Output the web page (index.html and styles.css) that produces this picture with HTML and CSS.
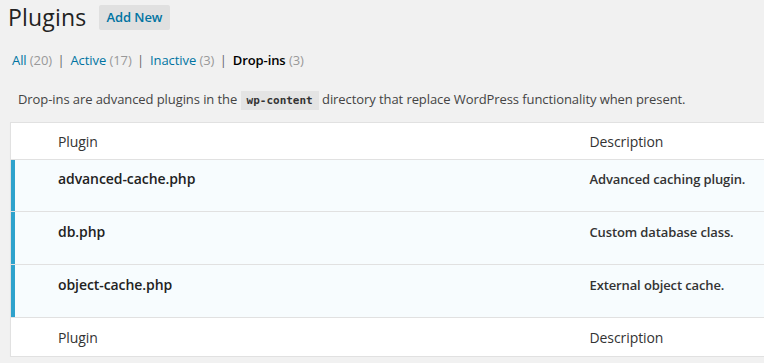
FILE: index.html
```html
<!DOCTYPE html>
<html lang="en">
<head>
  <meta charset="UTF-8" />
  <title>Plugins</title>
  <link rel="stylesheet" href="styles.css">
</head>
<body>
  <div class="wrap">
    <div class="title-row">
      <h1>Plugins</h1>
      <a class="add-new" href="#">Add New</a>
    </div>

    <ul class="subsubsub">
      <li><a href="#">All <span class="count">(20)</span></a> <span class="sep">|</span></li>
      <li><a href="#">Active <span class="count">(17)</span></a> <span class="sep">|</span></li>
      <li><a href="#">Inactive <span class="count">(3)</span></a> <span class="sep">|</span></li>
      <li><a class="current" href="#">Drop-ins <span class="count">(3)</span></a></li>
    </ul>

    <p class="intro">Drop-ins are advanced plugins in the <code>wp-content</code> directory that replace WordPress functionality when present.</p>

    <table class="plugins">
      <thead>
        <tr>
          <th class="col-name">Plugin</th>
          <th class="col-desc">Description</th>
        </tr>
      </thead>
      <tbody>
        <tr class="active">
          <td class="col-name"><strong>advanced-cache.php</strong></td>
          <td class="col-desc"><p>Advanced caching plugin.</p></td>
        </tr>
        <tr class="active">
          <td class="col-name"><strong>db.php</strong></td>
          <td class="col-desc"><p>Custom database class.</p></td>
        </tr>
        <tr class="active">
          <td class="col-name"><strong>object-cache.php</strong></td>
          <td class="col-desc"><p>External object cache.</p></td>
        </tr>
      </tbody>
      <tfoot>
        <tr>
          <th class="col-name">Plugin</th>
          <th class="col-desc">Description</th>
        </tr>
      </tfoot>
    </table>
  </div>
</body>
</html>
```

FILE: styles.css
```css
body {
  margin: 0;
  background: #f1f1f1;
  color: #444;
  font-family: 'Open Sans', sans-serif;
  font-size: 13px;
  letter-spacing: -0.08px;
  overflow: hidden;
}

.wrap {
  padding: 0 0 0 8px;
  width: 790px;
}

.title-row {
  display: flex;
  align-items: center;
  height: 36px;
}

h1 {
  margin: 0;
  font-size: 23px;
  font-weight: 400;
  letter-spacing: 0.2px;
  color: #222;
  line-height: 36px;
  position: relative;
  top: -1px;
}

.add-new {
  margin-left: 12px;
  padding: 0 8px;
  height: 25px;
  line-height: 25px;
  background: #e0e0e0;
  color: #0074a2;
  font-weight: 600;
  font-size: 13px;
  text-decoration: none;
  border-radius: 2px;
  position: relative;
  top: -1px;
}

.subsubsub {
  list-style: none;
  margin: 15px 0 0 4px;
  padding: 0;
  display: flex;
  gap: 4px;
  line-height: 18px;
  color: #666;
}

.subsubsub a {
  color: #0074a2;
  text-decoration: none;
}

.subsubsub a.current {
  color: #000;
  font-weight: 600;
}

.subsubsub .count {
  color: #999;
  font-weight: 400;
}

.subsubsub .sep {
  margin: 0 2px;
}

.intro {
  margin: 20px 0 0 10px;
  line-height: 20px;
}

code {
  font-family: 'DejaVu Sans Mono', monospace;
  font-size: 11px;
  font-weight: 700;
  letter-spacing: 0;
  background: #e4e4e4;
  color: #333;
  padding: 3px 6px;
}

.plugins {
  margin: 11px 0 0 2px;
  width: 790px;
  table-layout: fixed;
  border-collapse: collapse;
  background: #fff;
  border: 1px solid #e1e1e1;
  box-shadow: 0 1px 1px rgba(0, 0, 0, 0.04);
}

.plugins th {
  text-align: left;
  font-weight: 400;
  font-size: 14px;
  color: #333;
  height: 37px;
  padding: 0 10px;
  box-sizing: border-box;
}

.plugins tfoot th {
  height: 39px;
}

.plugins th.col-name,
.plugins td.col-name {
  padding-left: 47px;
  width: 569px;
}

.plugins thead tr {
  border-bottom: 1px solid #e1e1e1;
}

.plugins tfoot tr {
  border-top: 1px solid #e1e1e1;
}

.plugins td {
  vertical-align: top;
  height: 52px;
  padding: 9px 10px 0;
  box-sizing: border-box;
}

.plugins tbody tr + tr td {
  height: 53px;
  padding-top: 10px;
}

.plugins tbody tr {
  background: #f7fcfe;
  border-bottom: 1px solid #e1e1e1;
}

.plugins tbody tr:last-child {
  border-bottom: none;
}

.plugins tbody td:first-child {
  box-shadow: inset 4px 0 0 #2ea2cc;
}

.plugins td strong {
  font-size: 14px;
  font-weight: 600;
  color: #222;
  line-height: 20px;
}

.plugins td p {
  margin: 0;
  font-size: 13px;
  font-weight: 600;
  letter-spacing: -0.12px;
  color: #333;
  line-height: 20px;
}
```
